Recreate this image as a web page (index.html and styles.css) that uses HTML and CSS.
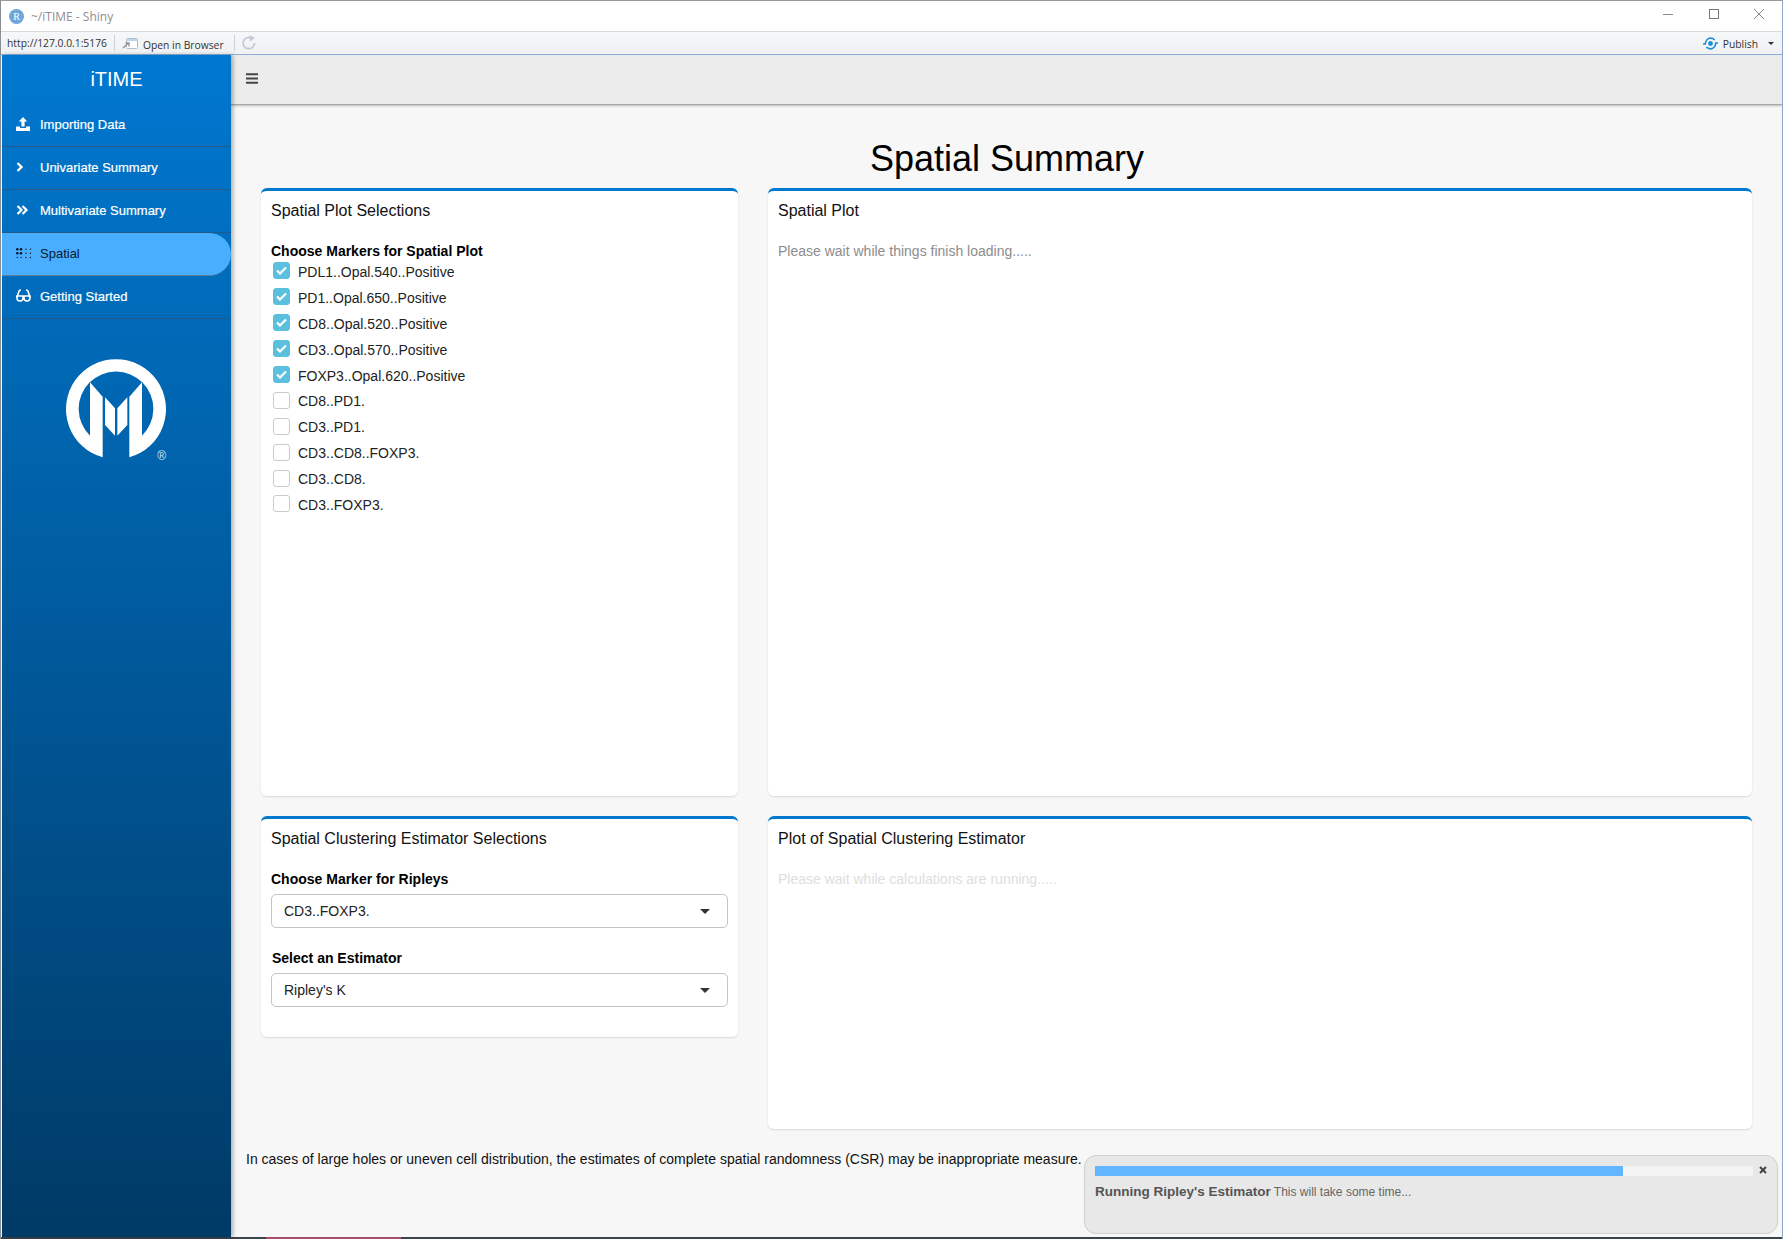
FILE: index.html
```html
<!DOCTYPE html>
<html lang="en">
<head>
  <meta charset="UTF-8" />
  <title>~/iTIME - Shiny</title>
  <link rel="stylesheet" href="styles.css">
</head>
<body>
<div class="window">
  <div class="titlebar">
    <span class="r-badge">R</span>
    <span class="window-title">~/iTIME - Shiny</span>
    <div class="window-controls">
      <svg width="10" height="10" viewBox="0 0 10 10"><path d="M0 5.5H10" stroke="#8a8a8a" fill="none"/></svg>
      <svg width="10" height="10" viewBox="0 0 10 10"><rect x="0.5" y="0.5" width="9" height="9" stroke="#777" fill="none"/></svg>
      <svg width="10" height="10" viewBox="0 0 10 10"><path d="M0 0L10 10M10 0L0 10" stroke="#8a8a8a" fill="none"/></svg>
    </div>
  </div>

  <div class="addressbar">
    <span class="url">http://127.0.0.1:5176</span>
    <span class="addr-sep"></span>
    <svg class="browser-icon" width="16" height="13" viewBox="0 0 16 13">
      <rect x="4.5" y="1.5" width="11" height="10" rx="1" fill="#fff" stroke="#b4bcc6"/>
      <path d="M5 2H15V4H5Z" fill="#bcd6ee"/>
      <path d="M1 11L6 6.5M3.5 6H7V9.5" stroke="#8d949c" stroke-width="1.4" fill="none"/>
    </svg>
    <span class="open-browser">Open in Browser</span>
    <span class="addr-sep"></span>
    <svg class="refresh-icon" width="16" height="16" viewBox="0 0 16 16">
      <path d="M13.5 8A5.7 5.7 0 1 1 10.5 3" stroke="#c3ccd6" stroke-width="1.8" fill="none"/>
      <path d="M8.5 0L14 3L9 6.5Z" fill="#c3ccd6"/>
    </svg>
    <div class="publish">
      <svg width="17" height="13" viewBox="0 0 17 13">
        <circle cx="8.5" cy="6.5" r="2.4" fill="#1a8fd8"/>
        <path d="M1 7H3.2C3.6 3.5 6 1.2 8.5 1.2C10.2 1.2 11.6 1.8 12.6 3M16 6H13.8C13.4 9.5 11 11.8 8.5 11.8C6.8 11.8 5.4 11.2 4.4 10" stroke="#1a8fd8" stroke-width="1.7" fill="none"/>
      </svg>
      <span>Publish</span>
      <i class="publish-caret"></i>
    </div>
  </div>

  <div class="app">
    <aside class="sidebar">
      <div class="brand">iTIME</div>
      <nav>
        <a class="nav-item">
          <svg class="nav-icon" width="14" height="14" viewBox="0 0 14 14" fill="#fff"><path d="M7 0L11.2 4.5H8.6V9.5H5.4V4.5H2.8ZM0 9.5H4V11H10V9.5H14V14H0Z"/></svg>
          Importing Data
        </a>
        <a class="nav-item">
          <svg class="nav-icon" width="14" height="14" viewBox="0 0 14 14" fill="none" stroke="#fff" stroke-width="2.4"><path d="M1.5 3L5.5 7L1.5 11"/></svg>
          Univariate Summary
        </a>
        <a class="nav-item">
          <svg class="nav-icon" width="14" height="14" viewBox="0 0 14 14" fill="none" stroke="#fff" stroke-width="2.2"><path d="M1.5 3L5.5 7L1.5 11M6.5 3L10.5 7L6.5 11"/></svg>
          Multivariate Summary
        </a>
        <a class="nav-item active">
          <svg class="nav-icon" width="17" height="11" viewBox="0 0 17 11" fill="#0a1a2a">
            <circle cx="1.3" cy="1.3" r="1.3"/><circle cx="5" cy="1.3" r="1.3"/><circle cx="1.3" cy="5.3" r="1.3"/><circle cx="5" cy="5.3" r="1.3"/>
            <circle cx="1.3" cy="9.5" r=".7"/><circle cx="5" cy="9.5" r=".7"/>
            <circle cx="10" cy="1.3" r=".7"/><circle cx="14.5" cy="1.3" r=".7"/><circle cx="10" cy="5.3" r=".7"/><circle cx="14.5" cy="5.3" r=".7"/><circle cx="10" cy="9.5" r=".7"/><circle cx="14.5" cy="9.5" r=".7"/>
          </svg>
          Spatial
        </a>
        <a class="nav-item">
          <svg class="nav-icon" width="15" height="13" viewBox="0 0 15 13" fill="none" stroke="#fff" stroke-width="1.6"><path d="M1 8.5L3 2Q3.4 1 5 1M14 8.5L12 2Q11.6 1 10 1"/><path d="M1 7H7V9A3 3 0 0 1 1 9ZM8 7H14V9A3 3 0 0 1 8 9Z"/></svg>
          Getting Started
        </a>
      </nav>
      <svg class="logo" width="130" height="125" viewBox="0 0 390 375">
        <path fill="#fff" d="M158 337A150 150 0 1 1 238 337V155L276 112V272A112 112 0 1 0 120 272V112L158 155Z"/>
        <path fill="#fff" d="M165 157L195 190V272L165 240ZM202 190L232 157V240L202 272Z"/>
        <text x="322" y="345" class="logo-mark">®</text>
      </svg>
    </aside>

    <main class="main">
      <div class="topbar">
        <svg width="12" height="11" viewBox="0 0 12 11"><path d="M0 1.25H12M0 5.5H12M0 9.75H12" stroke="#444" stroke-width="2"/></svg>
      </div>
      <div class="content">
        <h1 class="page-title">Spatial Summary</h1>
        <div class="card-grid">
          <section class="card">
            <h3 class="card-title">Spatial Plot Selections</h3>
            <label class="field-label">Choose Markers for Spatial Plot</label>
            <div class="check-list">
              <div class="check-row"><span class="check on"><svg width="11" height="9" viewBox="0 0 11 9"><path d="M1 4.5L4 7.5L10 1.5" stroke="#fff" stroke-width="2.2" fill="none"/></svg></span>PDL1..Opal.540..Positive</div>
              <div class="check-row"><span class="check on"><svg width="11" height="9" viewBox="0 0 11 9"><path d="M1 4.5L4 7.5L10 1.5" stroke="#fff" stroke-width="2.2" fill="none"/></svg></span>PD1..Opal.650..Positive</div>
              <div class="check-row"><span class="check on"><svg width="11" height="9" viewBox="0 0 11 9"><path d="M1 4.5L4 7.5L10 1.5" stroke="#fff" stroke-width="2.2" fill="none"/></svg></span>CD8..Opal.520..Positive</div>
              <div class="check-row"><span class="check on"><svg width="11" height="9" viewBox="0 0 11 9"><path d="M1 4.5L4 7.5L10 1.5" stroke="#fff" stroke-width="2.2" fill="none"/></svg></span>CD3..Opal.570..Positive</div>
              <div class="check-row"><span class="check on"><svg width="11" height="9" viewBox="0 0 11 9"><path d="M1 4.5L4 7.5L10 1.5" stroke="#fff" stroke-width="2.2" fill="none"/></svg></span>FOXP3..Opal.620..Positive</div>
              <div class="check-row"><span class="check"></span>CD8..PD1.</div>
              <div class="check-row"><span class="check"></span>CD3..PD1.</div>
              <div class="check-row"><span class="check"></span>CD3..CD8..FOXP3.</div>
              <div class="check-row"><span class="check"></span>CD3..CD8.</div>
              <div class="check-row"><span class="check"></span>CD3..FOXP3.</div>
            </div>
          </section>

          <section class="card">
            <h3 class="card-title">Spatial Plot</h3>
            <p class="wait-text">Please wait while things finish loading.....</p>
          </section>

          <section class="card card-short">
            <h3 class="card-title">Spatial Clustering Estimator Selections</h3>
            <label class="field-label">Choose Marker for Ripleys</label>
            <div class="select-box">CD3..FOXP3.<i class="select-caret"></i></div>
            <label class="field-label second">Select an Estimator</label>
            <div class="select-box">Ripley's K<i class="select-caret"></i></div>
          </section>

          <section class="card">
            <h3 class="card-title">Plot of Spatial Clustering Estimator</h3>
            <p class="wait-text faded">Please wait while calculations are running.....</p>
          </section>
        </div>
        <p class="csr-note">In cases of large holes or uneven cell distribution, the estimates of complete spatial randomness (CSR) may be inappropriate measure.</p>
      </div>
      <div class="notification">
        <div class="progress-row">
          <div class="progress"><div class="progress-fill" style="width: 80.2%"></div></div>
          <svg class="notif-close" width="8" height="8" viewBox="0 0 8 8"><path d="M1 1L7 7M7 1L1 7" stroke="#444" stroke-width="2"/></svg>
        </div>
        <div class="notif-text"><b>Running Ripley's Estimator</b> <span>This will take some time...</span></div>
      </div>
    </main>
  </div>

  <div class="desktop-strip"><span class="strip-pink"></span></div>
</div>
</body>
</html>
```

FILE: styles.css
```css
* {
  box-sizing: border-box;
}
body {
  margin: 0;
  font-family: "Liberation Sans", Arial, sans-serif;
  font-size: 14px;
  color: #000;
  background: #fff;
}
.window {
  width: 1783px;
  height: 1239px;
  display: flex;
  flex-direction: column;
  overflow: hidden;
  background: #fff;
  border-top: 1px solid #9a9a9a;
  border-left: 1px solid #8a8f96;
  border-right: 1px solid #8aa8cc;
}

/* window chrome */
.titlebar {
  height: 31px;
  flex: none;
  display: flex;
  align-items: center;
  padding-left: 8px;
  background: #fff;
  border-bottom: 1px solid #d9d9d9;
}
.r-badge {
  width: 15px;
  height: 15px;
  border-radius: 50%;
  background: #6fa6da;
  color: #fff;
  font-family: "Liberation Serif", serif;
  font-size: 10px;
  line-height: 15px;
  text-align: center;
  margin-right: 7px;
}
.window-title {
  font-family: "Open Sans", sans-serif;
  font-size: 12px;
  color: #8f8f8f;
}
.window-controls {
  margin-left: auto;
  margin-right: 18px;
  display: flex;
  gap: 35.5px;
  margin-top: -4px;
}
.addressbar {
  height: 23px;
  flex: none;
  display: flex;
  align-items: center;
  padding-left: 6px;
  background: linear-gradient(#f6f7f8, #eff1f3);
  border-bottom: 1px solid #8fb0dc;
  font-family: "Open Sans", sans-serif;
  font-size: 10.3px;
  color: #333;
}
.url {
  width: 107px;
  white-space: nowrap;
}
.addr-sep {
  width: 1px;
  height: 16px;
  background: #ccd0d5;
}
.browser-icon {
  margin: 0 5px 0 7px;
}
.open-browser {
  width: 91px;
  white-space: nowrap;
  margin-top: 3px;
}
.refresh-icon {
  margin-left: 6px;
}
.publish {
  margin-left: auto;
  margin-right: 8px;
  display: flex;
  align-items: center;
}
.publish span {
  margin-left: 4px;
  margin-top: 2px;
}
.publish-caret {
  width: 0;
  height: 0;
  margin-left: 10px;
  border-left: 3px solid transparent;
  border-right: 3px solid transparent;
  border-top: 3px solid #333;
}

/* app */
.app {
  flex: 1;
  display: flex;
  min-height: 0;
  padding-left: 1px;
  background: #fff;
}
.sidebar {
  width: 229px;
  flex: none;
  background: linear-gradient(#0078d0, #003a66);
  color: #fff;
  position: relative;
  z-index: 2;
  box-shadow: 2px 0 4px rgba(0, 0, 0, 0.3);
}
.brand {
  height: 49px;
  font-size: 20px;
  line-height: 48px;
  text-align: center;
}
.nav-item {
  height: 43px;
  display: flex;
  align-items: center;
  padding: 0 0 2px 38px;
  font-size: 13px;
  color: #fff;
  -webkit-text-stroke: 0.2px;
  border-bottom: 1px solid rgba(50, 80, 105, 0.65);
  position: relative;
}
.nav-icon {
  position: absolute;
  left: 14px;
  top: 13px;
}
.nav-item.active {
  background: #4aaeff;
  color: #0a1a2a;
  -webkit-text-stroke: 0;
  border-radius: 0 22px 22px 0;
  border-bottom: 1px solid #5b7f9c;
}
.nav-item.active .nav-icon {
  top: 15px;
}
.logo {
  display: block;
  margin: 26px 0 0 48px;
}
.logo-mark {
  fill: #dbe8f4;
  font-size: 36px;
}
.main {
  flex: 1;
  min-width: 0;
  display: flex;
  flex-direction: column;
  position: relative;
  background: #f7f7f7;
}
.topbar {
  height: 50px;
  flex: none;
  display: flex;
  align-items: center;
  padding: 0 0 2px 15px;
  background: #ececec;
  border-bottom: 1px solid #a8a8a8;
  box-shadow: 0 1px 2px rgba(0, 0, 0, 0.25);
}
.content {
  flex: 1;
  padding: 0 29px 0 30px;
}
.page-title {
  margin: 33px 0 0;
  font-size: 36px;
  font-weight: 400;
  line-height: 41px;
  text-align: center;
}
.card-grid {
  display: grid;
  grid-template-columns: 477px 984px;
  grid-template-rows: 608px 313px;
  column-gap: 30px;
  row-gap: 20px;
  margin-top: 9px;
}
.card {
  background: #fff;
  border-top: 3px solid #0078d0;
  border-radius: 6px;
  box-shadow: 0 1px 2px rgba(0, 0, 0, 0.12);
  padding: 0 10px;
}
.card-short {
  align-self: start;
  height: 221px;
}
.card-title {
  margin: 0;
  padding-top: 11px;
  height: 34px;
  font-size: 16px;
  font-weight: 400;
  line-height: 18px;
  color: #111;
}
.field-label {
  display: block;
  margin-top: 16px;
  font-size: 14px;
  font-weight: 700;
  line-height: 20px;
}
.check-list {
  margin-top: -2px;
}
.check-row {
  height: 25.9px;
  display: flex;
  align-items: center;
  padding-left: 2px;
  color: #222;
}
.check {
  width: 17px;
  height: 17px;
  margin-right: 8px;
  border: 1px solid #ccc;
  border-radius: 3px;
  background: #fff;
  display: flex;
  align-items: center;
  justify-content: center;
  margin-top: -2px;
}
.check.on {
  background: #5bc0de;
  border-color: #5bc0de;
}
.wait-text {
  margin: 16px 0 0;
  line-height: 20px;
  color: #8c8c8c;
}
.wait-text.faded {
  color: #dedede;
}
.select-box {
  height: 34px;
  margin-top: 5px;
  padding: 0 12px;
  display: flex;
  align-items: center;
  justify-content: space-between;
  border: 1px solid #c4c4c4;
  border-radius: 5px;
  background: #fff;
  color: #222;
}
.field-label.second {
  margin-top: 20px;
  padding-left: 1px;
}
.select-caret {
  width: 0;
  height: 0;
  margin-right: 5px;
  border-left: 5px solid transparent;
  border-right: 5px solid transparent;
  border-top: 5px solid #333;
}
.csr-note {
  margin: 20px 0 0 -15px;
  line-height: 20px;
  color: #111;
}

/* progress toast sits over the page */
.notification {
  position: absolute;
  left: 853px;
  bottom: 3px;
  width: 694px;
  height: 79px;
  padding: 10px 10px 0 10px;
  background: #e8e8e8;
  border: 1px solid #cfcfcf;
  border-radius: 12px;
}
.progress-row {
  display: flex;
  align-items: flex-start;
}
.progress {
  width: 659px;
  height: 10px;
  background: #f3f3f3;
}
.progress-fill {
  height: 100%;
  background: #62b6ff;
}
.notif-close {
  margin-left: 6px;
}
.notif-text {
  margin-top: 8px;
  line-height: 16px;
  color: #666;
  font-size: 12px;
}
.notif-text b {
  font-size: 13.5px;
  color: #555;
}
.desktop-strip {
  height: 2px;
  flex: none;
  background: #3c434c;
}
.strip-pink {
  display: block;
  width: 135px;
  height: 2px;
  margin-left: 265px;
  background: #a8506a;
}
```
